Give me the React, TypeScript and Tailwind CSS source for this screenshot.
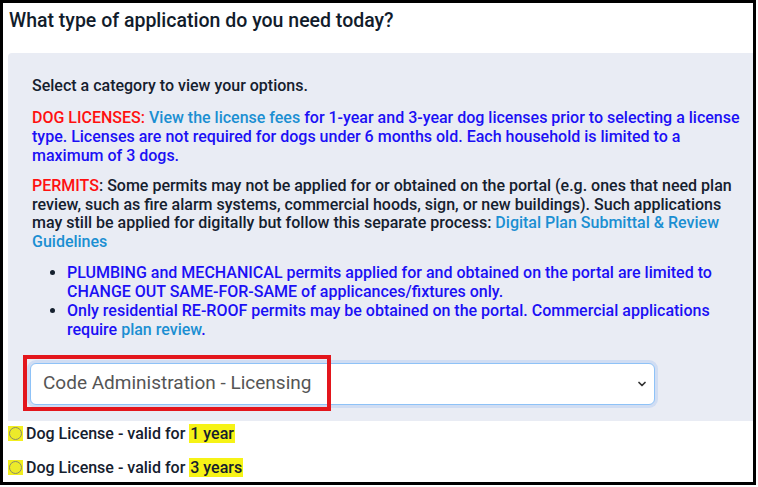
import { ChevronDown } from 'lucide-react'

const font = { fontFamily: 'Roboto, "Liberation Sans", sans-serif' }

function RadioRow({ highlight }: { highlight: string }) {
  return (
    <label className="flex h-[26px] items-center text-[16px] font-medium text-[#15202e]">
      <span className="flex h-[15px] w-[15px] items-center justify-center bg-[#f2ee1e]">
        <span className="h-[13px] w-[13px] rounded-full border border-[#8a8a6a] bg-[#ecea2a]" />
      </span>
      <span className="ml-[3px]">Dog License - valid for </span>
      <span className="ml-[4px] bg-[#f6f316] px-[1px] leading-[19px]">{highlight}</span>
    </label>
  )
}

export default function App() {
  return (
    <div style={font} className="h-[487px] w-[758px] bg-white">
      <div className="h-[485px] w-[756px] border-[3px] border-black">
        <h2 className="px-[6px] pt-[6px] pb-[20px] text-[19.5px] font-medium leading-[24px] text-[#111c2b]">
          What type of application do you need today?
        </h2>

        <div className="ml-[5px] rounded-tl-[4px] bg-[#e9ecf4] pt-[24px] pb-[16px] pl-[24px] pr-[2px] text-[16px] leading-[18.9px]">
          <p className="font-medium text-[#15202e]">Select a category to view your options.</p>

          <p className="mt-[13px] font-medium text-[#1b10f5]">
            <span className="text-[#ff1010]">DOG LICENSES: </span>
            <span className="text-[#1b8fd2]">View the license fees</span> for 1-year and 3-year dog
            licenses prior to selecting a license type. Licenses are not required for dogs under 6
            months old. Each household is limited to a maximum of 3 dogs.
          </p>

          <p className="mt-[11px] font-medium text-[#15202e]">
            <span className="text-[#ff1010]">PERMITS</span>: Some permits may not be applied for or
            obtained on the portal (e.g. ones that need plan review, such as fire alarm systems,
            commercial hoods, sign, or new buildings). Such applications may still be applied for
            digitally but follow this separate process:{' '}
            <span className="text-[#1b8fd2]">Digital Plan Submittal &amp; Review Guidelines</span>
          </p>

          <ul className="mt-[12px] list-disc pl-[35px] font-medium text-[#1b10f5] marker:text-[#15202e]">
            <li>
              PLUMBING and MECHANICAL permits applied for and obtained on the portal are limited to
              CHANGE OUT SAME-FOR-SAME of applicances/fixtures only.
            </li>
            <li>
              Only residential RE-ROOF permits may be obtained on the portal. Commercial applications
              require <span className="text-[#1b8fd2]">plan review</span>.
            </li>
          </ul>

          <div className="relative mt-[23px] ml-[-2px] w-[625px]">
            <select
              defaultValue="lic"
              style={font}
              className="h-[42px] w-full appearance-none rounded-[6px] border border-[#8ec2f7] bg-white pl-[12px] text-[19px] text-[#555] shadow-[0_0_0_3px_rgba(120,170,240,0.22)] outline-none"
            >
              <option value="lic">Code Administration - Licensing</option>
            </select>
            <ChevronDown
              strokeWidth={3.5}
              className="pointer-events-none absolute right-[7px] top-[15px] h-[12px] w-[12px] text-[#333]"
            />
            <div className="pointer-events-none absolute left-[-7px] top-[-8px] h-[56px] w-[308px] border-[4px] border-[#e3161c]" />
          </div>
        </div>

        <div className="flex flex-col gap-[8px] pl-[5px]">
          <RadioRow highlight="1 year" />
          <RadioRow highlight="3 years" />
        </div>
      </div>
    </div>
  )
}
